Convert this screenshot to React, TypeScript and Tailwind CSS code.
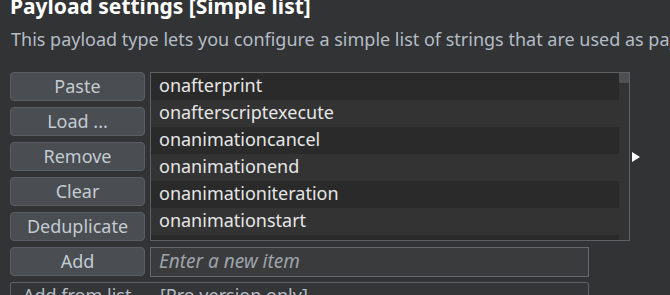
import React from "react";

const ACTIONS = ["Paste", "Load ...", "Remove", "Clear", "Deduplicate"];

const ITEMS = [
  "onafterprint",
  "onafterscriptexecute",
  "onanimationcancel",
  "onanimationend",
  "onanimationiteration",
  "onanimationstart",
  "onauxclick",
];

const btn =
  "h-[29px] w-[135px] rounded-[4px] border border-[#5a5d61] bg-[#4a4d51] text-[18px] leading-[27px] text-[#c3cbd3] text-center";

export default function App() {
  return (
    <div
      className="w-[670px] h-[295px] overflow-hidden bg-[#323335] pl-[10px]"
      style={{ fontFamily: '"Noto Sans", "Open Sans", sans-serif' }}
    >
      <div className="-mt-[5px] h-[22px] text-[21px] leading-[22px] font-bold text-white whitespace-nowrap">
        Payload settings [Simple list]
      </div>
      <div className="mt-[10px] h-[24px] pl-[1px] text-[18px] leading-[24px] text-[#b4bcc5] whitespace-nowrap">
        This payload type lets you configure a simple list of strings that are used as payloads.
      </div>

      <div className="mt-[21px] flex">
        <div className="flex flex-col gap-[6px]">
          {ACTIONS.map((a) => (
            <button key={a} className={btn}>
              {a}
            </button>
          ))}
        </div>

        <div className="ml-[5px] flex h-[169px] w-[480px] border border-[#5f6063] bg-[#333333]">
          <div className="flex-1 overflow-hidden">
            {ITEMS.map((it, i) => (
              <div
                key={it}
                className={`h-[27px] pl-[8px] text-[18px] leading-[25px] text-[#e6e6e6] whitespace-nowrap ${
                  i % 2 === 0 ? "bg-[#2a2a2a]" : "bg-[#333333]"
                }`}
              >
                {it}
              </div>
            ))}
          </div>
          <div className="w-[10px] bg-[#333333]">
            <div className="h-[10px] bg-[#4e4f51]" />
          </div>
        </div>

        <div className="ml-[2px] flex items-center">
          <svg width="9" height="10" viewBox="0 0 9 10">
            <path d="M0 0 L8 5 L0 10 Z" fill="#ffffff" />
          </svg>
        </div>
      </div>

      <div className="mt-[6px] flex">
        <button className={btn}>Add</button>
        <div className="ml-[5px] h-[30px] w-[439px] border border-[#66676a] bg-[#3a3b3d] pl-[8px] text-[19px] italic leading-[27px] text-[#9da3a9] whitespace-nowrap">
          Enter a new item
        </div>
      </div>

      <div className="mt-[5px] h-[30px] w-[579px] rounded-[2px] border border-[#5f6063] bg-[#343537] pl-[12px] text-[18px] leading-[24px] text-[#b4bcc5] whitespace-nowrap">
        Add from list ...&nbsp; [Pro version only]
      </div>
    </div>
  );
}
